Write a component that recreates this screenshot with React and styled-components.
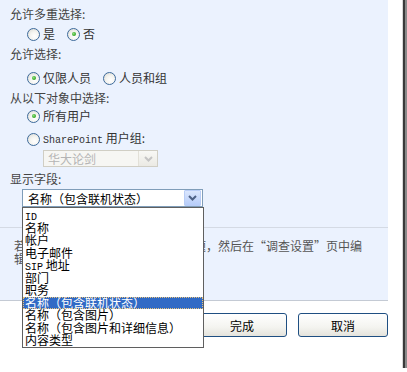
import React from 'react'
import styled, { createGlobalStyle } from 'styled-components'

const GlobalStyle = createGlobalStyle`
  html, body { margin: 0; padding: 0; background: #fff; }
  body {
    font-family: "Noto Sans CJK SC", "Liberation Sans", sans-serif;
    font-size: 12px;
    color: #4a4a4a;
  }
`;

const fields = [
  'ID', '名称', '帐户', '电子邮件', 'SIP 地址', '部门', '职务',
  '名称（包含联机状态）', '名称（包含图片）', '名称（包含图片和详细信息）', '内容类型',
];

function Chevron({ color }) {
  return (
    <svg width="9" height="6" viewBox="0 0 9 6">
      <path d="M1 1 L4.5 4.5 L8 1" fill="none" stroke={color} strokeWidth="2" />
    </svg>
  );
}

// latin bits in SimSun look like a small typewriter face
function Txt({ children }) {
  const parts = children.split(/([A-Za-z]+)/);
  return parts.map((p, i) => (/^[A-Za-z]+$/.test(p) ? <Latin key={i}>{p}</Latin> : p));
}

function Radio({ checked, children }) {
  return (
    <Option>
      <RadioDot $checked={checked} />
      <span><Txt>{children}</Txt></span>
    </Option>
  );
}

function App() {
  return (
    <>
      <GlobalStyle />
      <Dialog>
        <Panel>
          <Fields>
            <Label>允许多重选择:</Label>
            <OptionRow $gap={4}>
              <Radio>是</Radio>
              <Radio checked>否</Radio>
            </OptionRow>
            <Label $gap={4}>允许选择:</Label>
            <OptionRow $gap={8}>
              <Radio checked>仅限人员</Radio>
              <Radio>人员和组</Radio>
            </OptionRow>
            <Label $gap={4}>从以下对象中选择:</Label>
            <OptionRow $gap={2}>
              <Radio checked>所有用户</Radio>
            </OptionRow>
            <OptionRow $gap={7}>
              <Radio>SharePoint 用户组:</Radio>
            </OptionRow>
            <GroupSelect>
              <span>华大论剑</span>
              <GroupButton><Chevron color="#c4c4c4" /></GroupButton>
            </GroupSelect>
            <Label $gap={4}>显示字段:</Label>
            <SelectWrap>
              <SelectBox>
                <span>名称（包含联机状态）</span>
                <SelectButton><Chevron color="#4d6185" /></SelectButton>
              </SelectBox>
              <ListBox>
                {fields.map((f, i) => (
                  <ListItem key={i} $selected={i === 7}><Txt>{f}</Txt></ListItem>
                ))}
              </ListBox>
            </SelectWrap>
          </Fields>
          <Note>
            若要添加分支逻辑，请先保存此问题，然后在“调查设置”页中编<br />
            辑分支逻辑。
          </Note>
        </Panel>
        <Footer>
          <Button>完成</Button>
          <Button>取消</Button>
        </Footer>
      </Dialog>
    </>
  );
}

const Dialog = styled.div`
  width: 402px;
  height: 372px;
  margin-top: -4px;
  background: #fff;
  box-shadow: 1px 0 0 #d8d8d8, 3px 3px 0 #3a3a3a, 5px 4px 1px #8a8a8a;
  display: flex;
  flex-direction: column;
`;

const Panel = styled.div`
  width: 388px;
  height: 305px;
  box-sizing: border-box;
  background: #ebf2fe;
  border-bottom: 1px solid #c4cad4;
`;

const Fields = styled.div`
  box-sizing: border-box;
  height: 232px;
  padding: 10px 0 0 10px;
  border-bottom: 1px solid #d4dae4;
`;

const Label = styled.div`
  height: 16px;
  line-height: 16px;
  margin-top: ${p => p.$gap || 0}px;
  color: #444;
`;

const OptionRow = styled.div`
  display: flex;
  align-items: center;
  gap: 12px;
  height: 16px;
  margin-top: ${p => p.$gap || 0}px;
  padding-left: 17px;
  color: #333;
`;

const Option = styled.label`
  display: flex;
  align-items: center;
  gap: 3px;
  line-height: 16px;
`;

const RadioDot = styled.span`
  position: relative;
  width: 11px;
  height: 11px;
  border-radius: 50%;
  border: 1px solid #3d6a9b;
  background: radial-gradient(circle at 60% 65%, #ffffff 0%, #f4f4f0 45%, #d7d6cf 100%);
  &::after {
    content: '';
    display: ${p => (p.$checked ? 'block' : 'none')};
    position: absolute;
    left: 3.5px;
    top: 3.5px;
    width: 4px;
    height: 4px;
    border-radius: 50%;
    background: radial-gradient(circle at 40% 40%, #8ee07c 0%, #2ea31f 70%);
  }
`;

const Latin = styled.span`
  font-family: "Liberation Mono", monospace;
  font-size: 10px;
`;

const GroupSelect = styled.div`
  display: flex;
  align-items: center;
  justify-content: space-between;
  box-sizing: border-box;
  width: 115px;
  height: 17px;
  margin: 3px 0 0 33px;
  padding-left: 4px;
  border: 1px solid #d0cec4;
  background: #f6f6f3;
  color: #b4b4b4;
`;

const GroupButton = styled.span`
  display: flex;
  align-items: center;
  justify-content: center;
  width: 18px;
  height: 15px;
  border-left: 1px solid #e2e0d8;
  background: linear-gradient(#f8f8f5, #ebeae4);
`;

const SelectWrap = styled.div`
  position: relative;
  width: 181px;
  margin: 2px 0 0 12px;
`;

const SelectBox = styled.div`
  display: flex;
  align-items: center;
  justify-content: space-between;
  box-sizing: border-box;
  height: 18px;
  padding-left: 5px;
  border: 1px solid #7f9db9;
  background: #fff;
  color: #000;
`;

const SelectButton = styled.span`
  display: flex;
  align-items: center;
  justify-content: center;
  width: 15px;
  height: 14px;
  margin-right: 1px;
  border: 1px solid #b9cdf6;
  border-radius: 1px;
  background: linear-gradient(#dae6fd, #b7cdf9);
`;

const ListBox = styled.div`
  position: absolute;
  left: 0;
  top: 100%;
  width: 182px;
  box-sizing: border-box;
  padding: 1px 0 0;
  border: 1px solid #5f5f5f;
  background: #fff;
  color: #000;
  z-index: 2;
`;

const ListItem = styled.div`
  height: 12.5px;
  line-height: 12.5px;
  padding-left: 2px;
  white-space: nowrap;
  background: ${p => (p.$selected ? '#316ac5' : 'transparent')};
  color: ${p => (p.$selected ? '#fff' : '#000')};
  outline: ${p => (p.$selected ? '1px dotted #e8c27a' : 'none')};
  outline-offset: -1px;
`;

const Note = styled.div`
  padding: 11px 0 0 14px;
  line-height: 13px;
  color: #555;
  white-space: nowrap;
`;

const Footer = styled.div`
  display: flex;
  justify-content: flex-end;
  gap: 11px;
  width: 388px;
  padding-top: 12px;
`;

const Button = styled.button`
  width: 90px;
  height: 24px;
  padding: 0;
  border: 1px solid #1f4f82;
  border-radius: 3px;
  background: linear-gradient(#ffffff, #f4f4f0 60%, #e4e3dc);
  font-family: "Noto Sans CJK SC", sans-serif;
  font-size: 12px;
  color: #000;
`;

export default App;
